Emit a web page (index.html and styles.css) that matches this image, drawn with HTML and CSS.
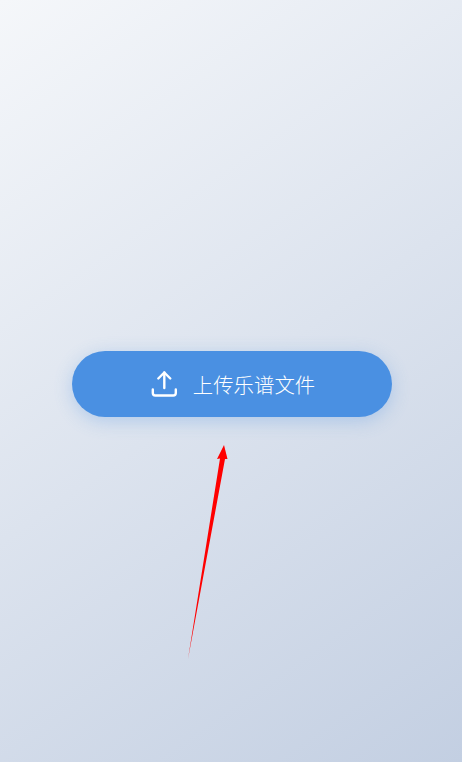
FILE: index.html
```html
<!DOCTYPE html>
<html lang="zh">
<head>
<meta charset="utf-8">
<title>上传乐谱文件</title>
<link rel="stylesheet" href="styles.css">
</head>
<body>
<main class="page">
  <button class="upload" type="button">
    <svg class="upload-icon" viewBox="0.700 0 32 32" fill="none" stroke="currentColor" stroke-width="2.400" stroke-linecap="round" stroke-linejoin="round" aria-hidden="true">
      <path d="M16 20V4.500"/>
      <path d="M10 10.500L16 4.500l6 6"/>
      <path d="M4.500 21.500V25a2.500 2.500 0 0 0 2.500 2.500h18a2.500 2.500 0 0 0 2.500-2.500v-3.500"/>
    </svg>
    <span>上传乐谱文件</span>
  </button>
</main>
<svg class="annotation" viewBox="0 0 462 762" aria-hidden="true">
  <polygon points="224,445 227.500,459 225,459 188,659 220,458.500 217,459" fill="#ff0000"/>
</svg>
</body>
</html>
```
FILE: styles.css
```css
* { box-sizing: border-box; }
html, body { margin: 0; height: 100%; }
body { position: relative; overflow: hidden; }
.page {
  height: 762px;
  display: flex;
  align-items: center;
  justify-content: center;
  background: linear-gradient(145deg, #f5f7fa 0%, #c3cfe2 100%);
}
.upload {
  width: 320px;
  height: 66px;
  margin: 6px 0 0 2px;
  display: flex;
  align-items: center;
  justify-content: center;
  gap: 12px;
  border: 0;
  border-radius: 33px;
  background: #4a90e2;
  color: #fff;
  font-family: "Noto Sans CJK SC", "Noto Sans", sans-serif;
  font-size: 20.4px;
  font-weight: 300;
  box-shadow: 0 4px 18px rgba(74, 144, 226, 0.3);
}
.upload-icon { width: 32px; height: 32px; flex: none; }
.annotation { position: absolute; inset: 0; width: 462px; height: 762px; pointer-events: none; }
```
